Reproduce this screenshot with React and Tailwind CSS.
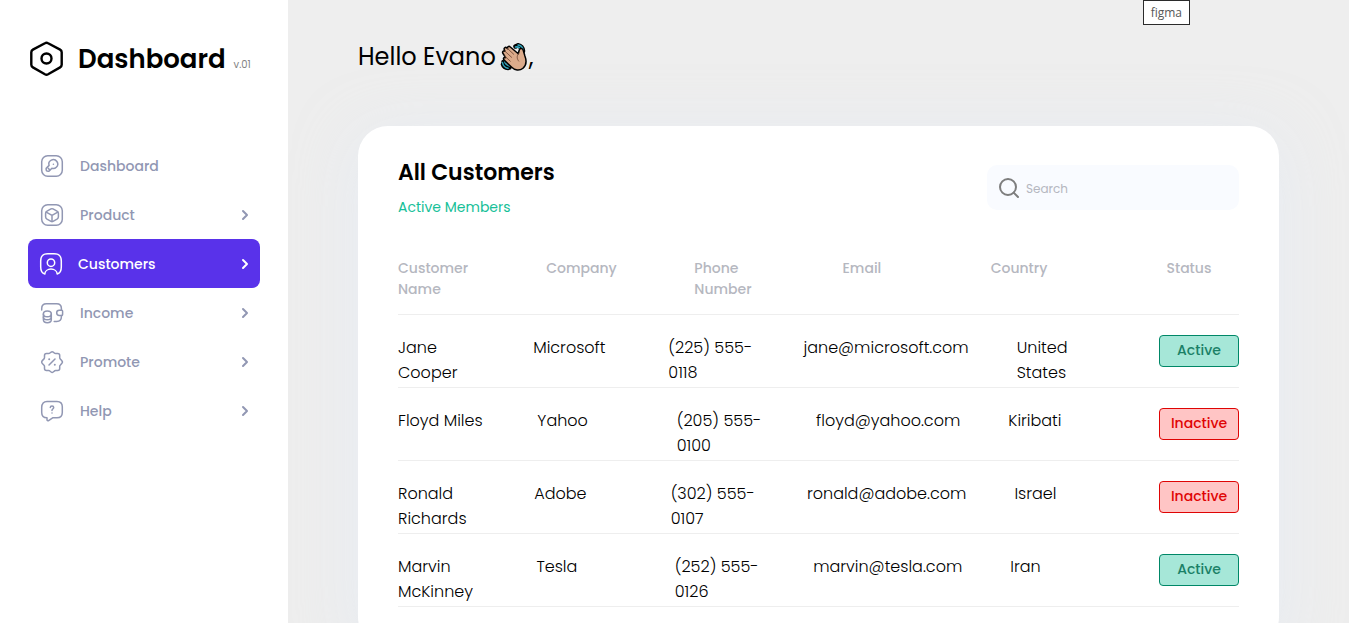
import { ChevronRight, Search } from "lucide-react";

const iconProps = {
  viewBox: "0 0 24 24",
  fill: "none",
  stroke: "currentColor",
  strokeWidth: 1.5,
  strokeLinecap: "round",
  strokeLinejoin: "round",
  "aria-hidden": true,
  className: "size-6 shrink-0",
};

function KeySquareIcon() {
  return (
    <svg {...iconProps}>
      <rect x="1.7" y="1.7" width="20.6" height="20.6" rx="6" />
      <path d="M16.3 13.2a4.4 4.4 0 0 1-4.4 1.1l-2.7 2.7c-.2.2-.6.3-.9.3l-1.2-.2c-.4-.1-.8-.5-.8-.9l-.2-1.2c0-.3.1-.7.3-.9l2.7-2.7a4.4 4.4 0 1 1 7.2 1.8Z" />
      <path d="m8.3 14.4 1.3 1.3" />
      <circle cx="13.4" cy="10.2" r=".8" fill="currentColor" stroke="none" />
    </svg>
  );
}

function CubeSquareIcon() {
  return (
    <svg {...iconProps}>
      <rect x="1.7" y="1.7" width="20.6" height="20.6" rx="6" />
      <path d="M11 5.9 7 8.1c-.8.5-1.4 1.5-1.4 2.4v3.2c0 .9.6 1.9 1.4 2.4l4 2.2c.6.3 1.4.3 2 0l4-2.2c.8-.5 1.4-1.5 1.4-2.4v-3.2c0-.9-.6-1.9-1.4-2.4l-4-2.2c-.6-.3-1.4-.3-2 0Z" />
      <path d="m6.2 9.1 5.8 3.3 5.8-3.3M12 18.4v-6" />
    </svg>
  );
}

function UserSquareIcon() {
  return (
    <svg {...iconProps}>
      <path d="M5.8 22c.2-2.8 2.9-4.9 6.200-4.900s6 2.100 6.200 4.900c2.900-.7 4.100-2.900 4.100-7V9c0-5.300-2-7.300-7.300-7.300H9C3.700 1.700 1.700 3.700 1.700 9v6c0 4.100 1.200 6.300 4.100 7Z" />
      <circle cx="12" cy="10.7" r="3.7" />
    </svg>
  );
}

function WalletIcon() {
  return (
    <svg {...iconProps}>
      <path d="M1.7 9V7.500c0-3 1.900-4.800 4.700-4.800h10.300c2.900 0 4.700 1.900 4.700 4.800v1.800h-2.100c-1.400 0-2.600 1-2.600 2.500s1.200 2.600 2.600 2.600h2.100v1.300c0 2.900-1.800 4.700-4.700 4.700h-2.500" />
      <path d="M21.400 9.300h.4c.4 0 .8.400.8.900v3.300c0 .5-.4.900-.8.900h-.4" />
      <path d="M3.400 14.300v-1.400c0-1.700 1.700-2.900 3.900-2.900s4 1.200 4 2.900v5.900c0 1.700-1.700 2.900-4 2.900s-3.900-1.200-3.900-2.900v-4.500Z" />
      <path d="M3.400 13c0 1.600 1.700 2.800 3.900 2.800s4-1.200 4-2.800M3.400 16c0 1.600 1.700 2.800 3.900 2.800s4-1.200 4-2.800" />
    </svg>
  );
}

function PromoteIcon() {
  return (
    <svg {...iconProps}>
      <path d="M4 15.200 2.300 13.500c-.8-.8-.8-2.100 0-2.900L4 8.900c.3-.3.5-.9.500-1.300V5.500c0-1.100.9-2 2-2h2.100c.4 0 1-.2 1.300-.5l1.200-.9c.6-.5 1.500-.5 2.100 0l1.100.9c.3.3.9.5 1.300.5h2.100c1.100 0 2 .9 2 2v2.100c0 .4.2 1 .5 1.300l1.500 1.700c.8.8.8 2.100 0 2.900l-1.500 1.700c-.3.3-.5.9-.5 1.300v2.100c0 1.100-.9 2-2 2h-2.100c-.4 0-1 .2-1.300.5l-1.100.9c-.6.500-1.500.5-2.100 0L9.900 21c-.3-.3-.9-.5-1.300-.5H6.500c-1.100 0-2-.9-2-2v-2.100c0-.3-.2-.9-.5-1.200Z" />
      <path d="m9 15 6-6" />
      <circle cx="9.200" cy="9.300" r="1" fill="currentColor" stroke="none" />
      <circle cx="14.800" cy="14.800" r="1" fill="currentColor" stroke="none" />
    </svg>
  );
}

function HelpIcon() {
  return (
    <svg {...iconProps}>
      <path d="M17 18.700h-4l-4.400 2.900a1 1 0 0 1-1.600-.8v-2.100c-3.200 0-5.300-2.100-5.300-5.300v-5c0-3.900 2.100-6 5.300-6h10c3.200 0 5.300 2.100 5.300 5.300v5.700c0 3.200-2.100 5.300-5.300 5.300Z" />
      <path d="M12 11.600v-.3c0-.7.4-1.100.9-1.400.4-.3.8-.7.8-1.300a1.700 1.700 0 0 0-3.400 0M12 14h.01" />
    </svg>
  );
}

function LogoIcon() {
  return (
    <svg viewBox="0 0 37 37" fill="none" stroke="black" strokeWidth="2.400" aria-hidden="true" className="size-[37px] shrink-0">
      <path d="M20.100 3.200l12 6.400c1 .6 1.600 1.500 1.600 2.600v12.600c0 1.100-.6 2-1.600 2.600l-12 6.900c-1 .5-2.200.5-3.200 0l-12-6.900c-1-.6-1.600-1.500-1.600-2.600V12.200c0-1.100.6-2 1.600-2.600l12-6.400c1-.6 2.200-.6 3.200 0Z" />
      <circle cx="18.500" cy="18.500" r="5" />
    </svg>
  );
}

function WavingHand() {
  return (
    <svg viewBox="0 0 28 30" role="img" aria-label="waving hand" className="mr-px ml-1 inline-block h-[30px] w-7 align-[-7px]" strokeLinecap="round" strokeLinejoin="round">
      <g stroke="black" strokeWidth="4.500" fill="none">
        <path d="M15.500 4.500q4-2.500 6.500 3.500M18 3.200q4.500.8 5 5.800M3.500 20q.5 5 6 5.500M3 22.500q1 3.500 5 3.500" />
      </g>
      <g stroke="#2fa5bd" strokeWidth="1.500" fill="none">
        <path d="M15.500 5q4-.8 5.500 3.500M18 3q4.500.6 5 5M4.500 18.500q.4 4.500 5 5.500M2.500 20.500q.8 5 5.500 5.800" />
      </g>
      <path d="M3 11.500c-1.200-1.800.7-3.300 2-2.200L4.400 8c-1-2 1-3.400 2.400-2.100l.8.700c-.6-1.900 1.300-3 2.700-1.600l8 6.800.8-3.300c.6-2.700 3.700-2.400 4.200 0l1.600 5.500c2.100 5.500 1.200 9.500-1.900 12.200-3.600 3-8.200 2.200-11.300-.9l-7.500-7.200c-1.600-1.500-.1-3.300 1.500-2.500Z" fill="#dcab8b" stroke="black" strokeWidth="1.500" />
      <path d="m7.600 6.600 6 5.600M5 9.300l6.600 6M4.800 14.200l5.500 5M18.300 11.800c-1.900 2.700-1.200 5.400.4 7.300" fill="none" stroke="#805641" strokeWidth="1" />
    </svg>
  );
}

const navItems = [
  { label: "Dashboard", Icon: KeySquareIcon },
  { label: "Product", Icon: CubeSquareIcon, expandable: true },
  { label: "Customers", Icon: UserSquareIcon, expandable: true, active: true },
  { label: "Income", Icon: WalletIcon, expandable: true },
  { label: "Promote", Icon: PromoteIcon, expandable: true },
  { label: "Help", Icon: HelpIcon, expandable: true },
];

const columns = ["Customer Name", "Company", "Phone Number", "Email", "Country", "Status"];

const customers = [
  { name: "Jane Cooper", company: "Microsoft", phone: "(225) 555-0118", email: "jane@microsoft.com", country: "United States", active: true },
  { name: "Floyd Miles", company: "Yahoo", phone: "(205) 555-0100", email: "floyd@yahoo.com", country: "Kiribati", active: false },
  { name: "Ronald Richards", company: "Adobe", phone: "(302) 555-0107", email: "ronald@adobe.com", country: "Israel", active: false },
  { name: "Marvin McKinney", company: "Tesla", phone: "(252) 555-0126", email: "marvin@tesla.com", country: "Iran", active: true },
];

function Sidebar() {
  return (
    <aside className="w-72 shrink-0 bg-white px-7 pt-10">
      <div className="flex items-center">
        <LogoIcon />
        <span className="ml-[13px] text-[26px] leading-9 font-semibold">Dashboard</span>
        <span className="mt-3 ml-2 text-[10px] leading-4 text-[#838383]">v.01</span>
      </div>
      <nav className="mt-16">
        <ul>
          {navItems.map(({ label, Icon, expandable, active }) => (
            <li key={label}>
              <a
                href="#"
                aria-current={active ? "page" : undefined}
                className={
                  active
                    ? "flex h-[49px] items-center gap-[15px] rounded-lg bg-[#5932ea] pr-[7px] pl-[11px] text-white"
                    : "flex h-[49px] items-center gap-4 rounded-lg pr-[7px] pl-3 text-[#9197b3]"
                }
              >
                <Icon />
                <span className="flex-1 text-sm font-medium">{label}</span>
                {expandable && <ChevronRight className="size-4" strokeWidth={3} aria-hidden="true" />}
              </a>
            </li>
          ))}
        </ul>
      </nav>
    </aside>
  );
}

function StatusBadge({ active }) {
  return (
    <span
      className={
        active
          ? "flex h-8 w-20 justify-center rounded border border-[#008767] bg-[#a6e7d8] pt-1 text-sm leading-[21px] font-medium text-[#1a8066]"
          : "flex h-8 w-20 justify-center rounded border border-[#df0404] bg-[#ffc5c5] pt-1 text-sm leading-[21px] font-medium text-[#df0404]"
      }
    >
      {active ? "Active" : "Inactive"}
    </span>
  );
}

function CustomerTable() {
  return (
    <table className="mt-10 block w-full text-left">
      <thead className="block">
        <tr className="flex gap-12 border-b border-[#eee] pb-[14px]">
          {columns.map((column) => (
            <th
              key={column}
              scope="col"
              className="flex-1 text-sm leading-[21px] font-medium text-[#b5b7c0] last:text-center"
            >
              {column}
            </th>
          ))}
        </tr>
      </thead>
      <tbody className="block">
        {customers.map((customer) => (
          <tr key={customer.email} className="flex min-h-[73px] gap-12 border-b border-[#eee] pt-5 text-base leading-[25px] font-light">
            <td className="flex-1">{customer.name}</td>
            <td className="flex-1">{customer.company}</td>
            <td className="flex-1">{customer.phone}</td>
            <td className="flex-1">{customer.email}</td>
            <td className="flex-1">{customer.country}</td>
            <td className="flex flex-1 items-start justify-end">
              <StatusBadge active={customer.active} />
            </td>
          </tr>
        ))}
      </tbody>
    </table>
  );
}

export default function App() {
  return (
    <div className="relative flex h-screen overflow-hidden bg-[#eee] font-[Poppins,Inter,sans-serif] text-black">
      <Sidebar />
      <main className="min-w-0 flex-1 overflow-y-auto px-[70px] pt-[39px] pb-10 [scrollbar-width:none]">
        <h1 className="text-2xl leading-9">
          Hello Evano
          <WavingHand />,
        </h1>
        <section className="mt-[51px] rounded-[30px] bg-white px-10 pt-[30px] pb-10 shadow-[0_10px_60px_0_rgba(226,236,249,0.5)]">
          <header className="flex items-start justify-between">
            <div>
              <h2 className="text-[22px] leading-[33px] font-semibold">All Customers</h2>
              <p className="mt-2 text-sm leading-[21px] text-[#16c098]">Active Members</p>
            </div>
            <label className="mt-[9px] flex h-[45px] w-[252px] items-center gap-[5px] rounded-[10px] bg-[#f9fbff] px-[10px]">
              <Search className="size-6 shrink-0 text-[#7e7e7e]" strokeWidth={2} aria-hidden="true" />
              <input
                type="search"
                placeholder="Search"
                aria-label="Search"
                className="min-w-0 flex-1 bg-transparent pt-0.5 text-xs outline-none placeholder:text-[#b5b7c0]"
              />
            </label>
          </header>
          <CustomerTable />
        </section>
      </main>
      <div
        role="tooltip"
        className="absolute top-0 right-[159px] border border-[#2b2b2b] bg-white px-[7px] py-[3px] font-['Open_Sans',sans-serif] text-xs leading-[17px] text-[#575757]"
      >
        figma
      </div>
    </div>
  );
}
